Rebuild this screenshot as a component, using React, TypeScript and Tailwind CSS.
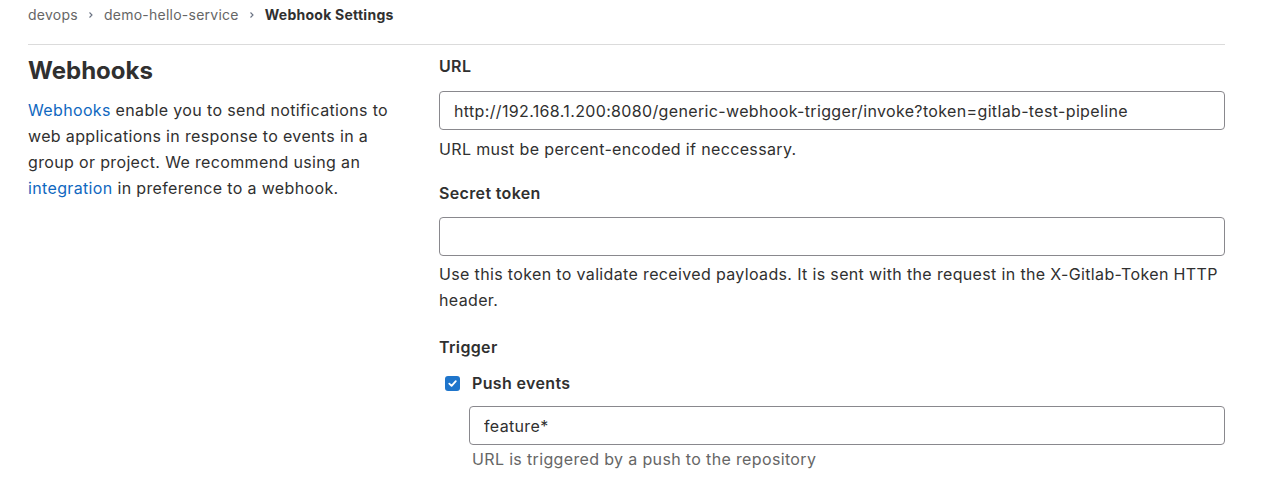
import React from 'react';

function Chevron() {
  return (
    <svg className="mx-[9px] h-2 w-2 text-gray-500" viewBox="0 0 8 8" fill="none">
      <path d="M2.5 1.5 5 4 2.5 6.5" stroke="currentColor" strokeWidth="1.1" />
    </svg>
  );
}

export default function App() {
  return (
    <div
      className="min-h-screen bg-white px-7 text-[#303030]"
      style={{ fontFamily: 'Inter, "Liberation Sans", Arial, sans-serif' }}
    >
      <nav className="flex h-[29px] items-center text-[14px] tracking-[0.25px] text-[#666]">
        <span>devops</span>
        <Chevron />
        <span>demo-hello-service</span>
        <Chevron />
        <span className="font-bold text-[#303030]">Webhook Settings</span>
      </nav>

      <div className="mt-[15px] mr-[24px] flex border-t border-[#dbdbdb] tracking-[0.35px]">
        <div className="w-[411px] shrink-0 pt-[11px] pr-[12px]">
          <h4 className="text-[24px] font-bold leading-[30px] tracking-normal">Webhooks</h4>
          <p className="mt-[11px] max-w-[380px] text-[16px] leading-[26px]">
            <a className="text-[#1068bf]">Webhooks</a> enable you to send
            notifications to web applications in response to events in a group
            or project. We recommend using an{' '}
            <a className="text-[#1068bf]">integration</a> in preference to a
            webhook.
          </p>
        </div>

        <div className="flex-1 pt-[10px] text-[16px]">
          <label className="block font-semibold leading-[22px]">URL</label>
          <input
            className="mt-[14px] block h-[39px] w-full rounded-[4px] border border-[#89888d] px-[14px] text-[16px] text-[#303030] outline-none"
            defaultValue="http://192.168.1.200:8080/generic-webhook-trigger/invoke?token=gitlab-test-pipeline"
          />
          <p className="mt-[6px] leading-[26px]">
            URL must be percent-encoded if neccessary.
          </p>

          <label className="mt-[20px] block font-semibold leading-[22px]">
            Secret token
          </label>
          <input className="mt-[13px] block h-[39px] w-full rounded-[4px] border border-[#89888d] px-[14px] outline-none" />
          <p className="mt-[5px] leading-[26px]">
            Use this token to validate received payloads. It is sent with the
            request in the X-Gitlab-Token HTTP header.
          </p>

          <label className="mt-[23px] block font-semibold leading-[22px]">
            Trigger
          </label>
          <div className="mt-[14px] flex items-center pl-[6px]">
            <span className="flex h-[15px] w-[15px] items-center justify-center rounded-[3px] bg-[#1f75cb]">
              <svg viewBox="0 0 12 12" className="h-[11px] w-[11px]" fill="none">
                <path
                  d="M2.5 6.2 5 8.6 9.6 3.4"
                  stroke="white"
                  strokeWidth="2"
                  strokeLinecap="round"
                  strokeLinejoin="round"
                />
              </svg>
            </span>
            <span className="ml-[12px] font-semibold leading-[22px]">Push events</span>
          </div>
          <div className="pl-[30px]">
            <input
              className="mt-[12px] block h-[39px] w-full rounded-[4px] border border-[#89888d] px-[14px] outline-none"
              defaultValue="feature*"
            />
            <p className="mt-[1px] pl-[3px] leading-[26px] text-[#666]">
              URL is triggered by a push to the repository
            </p>
          </div>
        </div>
      </div>
    </div>
  );
}
